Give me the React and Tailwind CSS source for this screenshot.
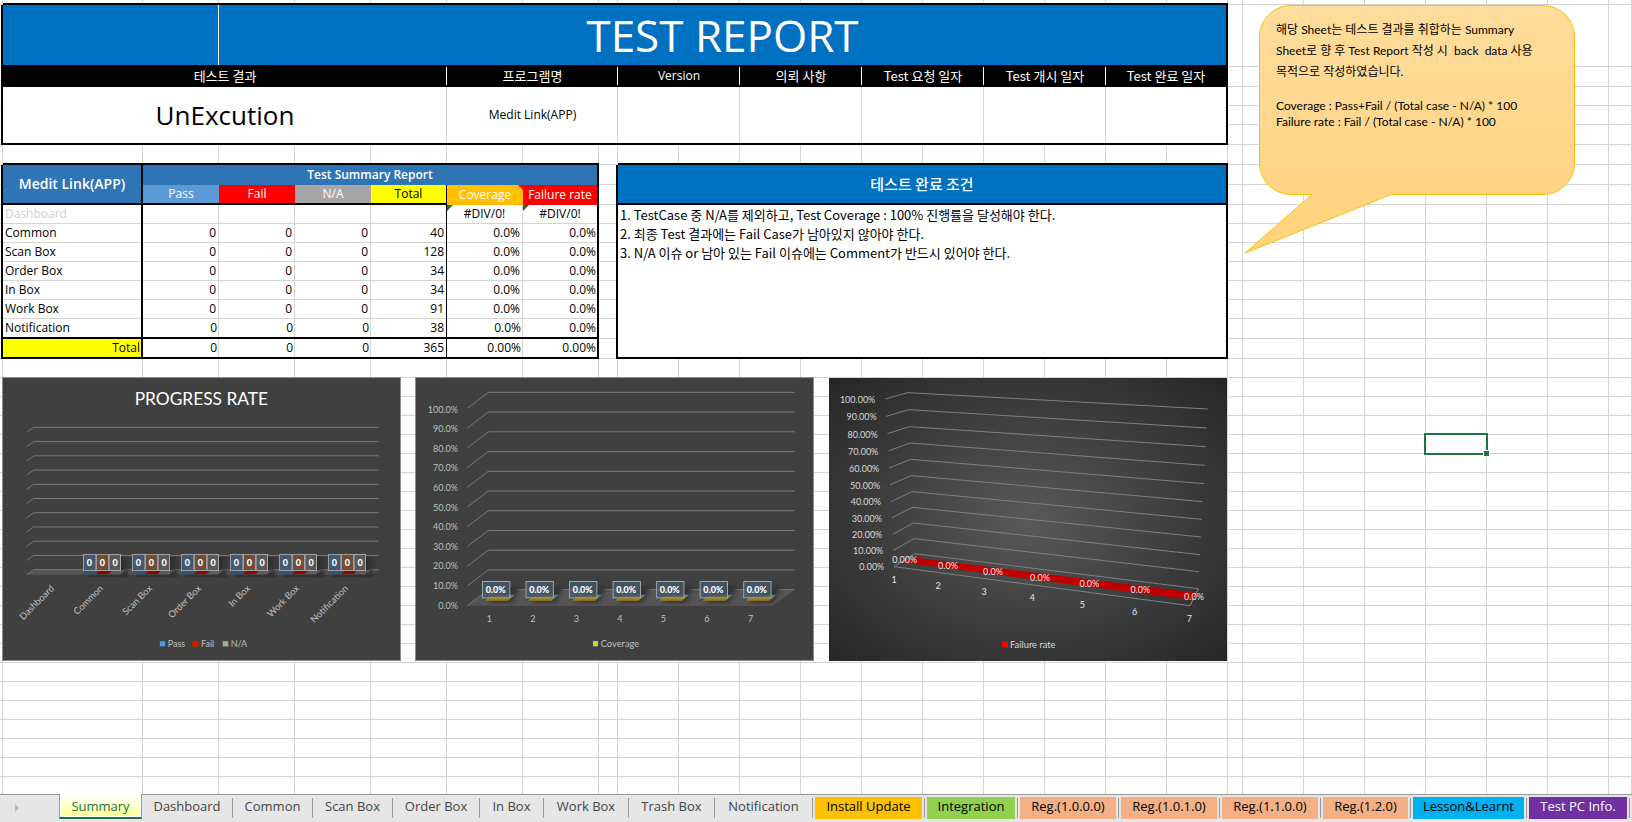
import { twMerge } from "tailwind-merge";

const LATIN = "font-['Open_Sans','Noto_Sans_CJK_KR',sans-serif]";
const HANGUL = "font-['Noto_Sans_CJK_KR',sans-serif] text-[13px]";

// Thick rules take the whole side of a cell; the thin grid line on the other
// side is an inset shadow, so that the two never meet in a mitred corner.
const BLACK_BOX = "border-r-2 border-b-2 border-r-black border-b-black shadow-none";
const EDGE = "border-r-2 border-b-0 border-r-black pb-px shadow-[inset_0_-1px_0_#d4d4d4]";
const THIN_EDGE = "border-b-0 border-r-black pb-px shadow-[inset_0_-1px_0_#d4d4d4]";
const FOOT = "border-r-0 border-b-2 border-b-black shadow-[inset_-1px_0_0_#d4d4d4]";

const COLUMNS = [
  "w-[3px]",
  "w-[140px]",
  ...Array(6).fill("w-[76px]"),
  "w-[19px]",
  ...Array(10).fill("w-[61px]"),
  "w-[15px]",
  ...Array(6).fill("w-[61px]"),
  "",
];

function Cell({ className, children, ...rest }) {
  return (
    <td
      className={twMerge("border-r border-b border-[#d4d4d4] bg-white p-0", className)}
      {...rest}
    >
      {children}
    </td>
  );
}

function Head({ className, children, ...rest }) {
  return (
    <th
      className={twMerge("border-r border-b border-[#d4d4d4] p-0 text-center font-normal", className)}
      {...rest}
    >
      {children}
    </th>
  );
}

function Blank({ count, className }) {
  return Array.from({ length: count }, (_, i) => <Cell key={i} className={className} />);
}

const INFO_HEADS = [
  { label: "테스트 결과", span: 5 },
  { label: "프로그램명", span: 3 },
  { label: "Version", span: 2, latin: true },
  { label: "의뢰 사항", span: 2 },
  { label: "Test 요청 일자", span: 2 },
  { label: "Test 개시 일자", span: 2 },
  { label: "Test 완료 일자", span: 2 },
];

const RESULTS = [
  ["Common", 40],
  ["Scan Box", 128],
  ["Order Box", 34],
  ["In Box", 34],
  ["Work Box", 91],
  ["Notification", 38],
];

function ReportHeader() {
  return (
    <>
      <tr className="h-[5px]">
        <Cell />
        <Blank count={18} className={FOOT} />
        <Blank count={8} />
      </tr>
      <tr className="h-[62px]">
        <Cell className={EDGE} />
        <Cell
          colSpan={2}
          className={twMerge(FOOT, "bg-[#0070c0] shadow-[inset_-1px_0_0_#ffffff]")}
        />
        <Head colSpan={16} className={`${BLACK_BOX} bg-[#0070c0] text-[44px] leading-[56px] text-white`}>
          TEST REPORT
        </Head>
        <Blank count={8} />
      </tr>
      <tr className="h-[20px]">
        <Cell className={EDGE} />
        {INFO_HEADS.map(({ label, span, latin }, i) => (
          <Head
            key={label}
            colSpan={span}
            className={twMerge(
              FOOT,
              "bg-black leading-[16px] text-white shadow-[inset_-1px_0_0_#ffffff]",
              latin ? "" : HANGUL,
              i === INFO_HEADS.length - 1 ? BLACK_BOX : "",
            )}
          >
            {label}
          </Head>
        ))}
        <Blank count={8} />
      </tr>
      <tr className="h-[19px]">
        <Cell className={EDGE} />
        <Cell rowSpan={3} colSpan={5} className={`${FOOT} text-center text-[26px] leading-[32px]`}>
          UnExcution
        </Cell>
        <Cell rowSpan={3} colSpan={3} className={`${FOOT} text-center`}>
          Medit Link(APP)
        </Cell>
        {[0, 1, 2, 3].map((i) => (
          <Cell key={i} rowSpan={3} colSpan={2} className={FOOT} />
        ))}
        <Cell rowSpan={3} colSpan={2} className={BLACK_BOX} />
        <Blank count={8} />
      </tr>
      <tr className="h-[19px]">
        <Cell className={EDGE} />
        <Blank count={8} />
      </tr>
      <tr className="h-[20px]">
        <Cell className={EDGE} />
        <Blank count={8} />
      </tr>
    </>
  );
}

function ErrorCell({ className }) {
  return (
    <Cell className={twMerge("relative text-center", className)}>
      <svg className="absolute top-0 left-0" width="6" height="6" viewBox="0 0 6 6" aria-hidden="true">
        <path d="M0 0H6L0 6Z" fill="#0a7d0a" />
      </svg>
      #DIV/0!
    </Cell>
  );
}

function SummaryRows() {
  return (
    <>
      <tr className="h-[20px]">
        <Cell />
        <Blank count={7} className={FOOT} />
        <Cell />
        <Blank count={10} className={FOOT} />
        <Blank count={8} />
      </tr>
      <tr className="h-[20px]">
        <Cell className={EDGE} />
        <Head rowSpan={2} className={`${BLACK_BOX} bg-[#2f75b5] text-[14px] font-semibold text-white`}>
          Medit Link(APP)
        </Head>
        <Head colSpan={6} className={twMerge(EDGE, "bg-[#2f75b5] font-semibold text-white shadow-none")}>
          Test Summary Report
        </Head>
        <Cell className={EDGE} />
        <Head
          rowSpan={2}
          colSpan={10}
          className={`${BLACK_BOX} bg-[#0070c0] font-['Noto_Sans_CJK_KR',sans-serif] text-[15px] font-medium text-white`}
        >
          테스트 완료 조건
        </Head>
        <Blank count={8} />
      </tr>
      <tr className="h-[20px]">
        <Cell className={EDGE} />
        <Head className={twMerge(FOOT, "bg-[#5b9bd5] text-white shadow-none")}>Pass</Head>
        <Head className={twMerge(FOOT, "bg-[#ff0000] text-white shadow-none")}>Fail</Head>
        <Head className={twMerge(FOOT, "bg-[#a6a6a6] text-white shadow-none")}>N/A</Head>
        <Head className={twMerge(BLACK_BOX, "border-r bg-[#ffff00]")}>Total</Head>
        <Head className="relative border-r-0 border-b-0 bg-[#ffc000] pb-px text-white">
          <svg className="absolute top-0 right-0" width="5" height="5" viewBox="0 0 5 5" aria-hidden="true">
            <path d="M0 0H5V5Z" fill="#ff0000" />
          </svg>
          Coverage
        </Head>
        <Head className={twMerge(EDGE, "bg-[#ff0000] text-white shadow-none")}>Failure rate</Head>
        <Cell className={EDGE} />
        <Blank count={8} />
      </tr>
      <tr className="h-[19px]">
        <Cell className={EDGE} />
        <Cell className={`${EDGE} pl-[2px] text-[#d0cece]`}>Dashboard</Cell>
        <Blank count={3} />
        <Cell className={THIN_EDGE} />
        <ErrorCell />
        <ErrorCell className={EDGE} />
        <Cell className={EDGE} />
        <Cell rowSpan={8} colSpan={10} className={`${BLACK_BOX} ${HANGUL} pl-[2px] align-top leading-[19px]`}>
          <ol>
            <li>1. TestCase 중 N/A를 제외하고, Test Coverage : 100% 진행률을 달성해야 한다.</li>
            <li>2. 최종 Test 결과에는 Fail Case가 남아있지 않아야 한다.</li>
            <li>3. N/A 이슈 or 남아 있는 Fail 이슈에는 Comment가 반드시 있어야 한다.</li>
          </ol>
        </Cell>
        <Blank count={8} />
      </tr>
      {RESULTS.map(([name, total], i) => {
        const last = i === RESULTS.length - 1;
        const foot = last ? FOOT : "";
        const edge = last ? BLACK_BOX : EDGE;
        return (
          <tr key={name} className={last ? "h-[20px]" : "h-[19px]"}>
            <Cell className={EDGE} />
            <Cell className={`${edge} pl-[2px]`}>{name}</Cell>
            {[0, 1, 2].map((c) => (
              <Cell key={c} className={`${foot} pr-[2px] text-right`}>0</Cell>
            ))}
            <Cell className={twMerge(last ? BLACK_BOX : THIN_EDGE, "border-r pr-[2px] text-right")}>{total}</Cell>
            <Cell className={`${foot} pr-[2px] text-right`}>0.0%</Cell>
            <Cell className={`${edge} pr-px text-right`}>0.0%</Cell>
            <Cell className={EDGE} />
            <Blank count={8} />
          </tr>
        );
      })}
      <tr className="h-[20px]">
        <Cell className={EDGE} />
        <Cell className={`${BLACK_BOX} bg-[#ffff00] pr-px text-right`}>Total</Cell>
        {[0, 1, 2].map((c) => (
          <Cell key={c} className={`${FOOT} pr-[2px] text-right`}>0</Cell>
        ))}
        <Cell className={twMerge(BLACK_BOX, "border-r pr-[2px] text-right")}>365</Cell>
        <Cell className={`${FOOT} pr-[2px] text-right`}>0.00%</Cell>
        <Cell className={`${BLACK_BOX} pr-px text-right`}>0.00%</Cell>
        <Cell className={EDGE} />
        <Blank count={8} />
      </tr>
    </>
  );
}

function EmptyRows() {
  return Array.from({ length: 60 }, (_, r) => (
    <tr key={r} className="h-[19px]">
      {r === 4 ? (
        <>
          <Blank count={23} />
          <Cell className="relative">
            <div className="absolute -inset-[2px] border-2 border-[#217346]">
              <div className="absolute -right-[4px] -bottom-[4px] size-[7px] border border-white bg-[#217346]" />
            </div>
          </Cell>
          <Blank count={3} />
        </>
      ) : (
        <Blank count={27} />
      )}
    </tr>
  ));
}

const CHART_FONT = "font-['Lato',sans-serif] text-[27px]";

function ProgressChart() {
  const names = ["Dashboard", "Common", "Scan Box", "Order Box", "In Box", "Work Box", "Notification"];
  return (
    <svg width="399" height="284" viewBox="6 21 1197 852" role="img" aria-label="Progress rate" className={CHART_FONT}>
      <defs>
        <linearGradient id="shade" x1="0" x2="1">
          <stop offset="0" stopColor="#2c2c2c" />
          <stop offset="1" stopColor="#2c2c2c" stopOpacity="0" />
        </linearGradient>
      </defs>
      <rect x="7.5" y="22.5" width="1194" height="849" fill="#404040" stroke="#8c8c8c" strokeWidth="3" />
      <text x="604" y="104" textAnchor="middle" fill="#fff" className="text-[52px]">PROGRESS RATE</text>
      <path d="M80 614L102 599H1136L1114 614Z" fill="#555" />
      {Array.from({ length: 11 }, (_, i) => 172 + i * 42.7).map((y) => (
        <path key={y} d={`M80 ${y + 15}L101 ${y}H1136`} fill="none" stroke="#7a7a7a" strokeWidth="3" />
      ))}
      {names.map((name, i) => (
        <text
          key={name}
          transform={`translate(${164 + i * 147} 657) rotate(-45)`}
          textAnchor="end"
          fill="#bfbfbf"
          className="text-[28px]"
        >
          {name}
        </text>
      ))}
      {[0, 1, 2, 3, 4, 5].map((i) => (
        <g key={i} transform={`translate(${i * 147} 0)`}>
          <rect x="362" y="560" width="34" height="62" fill="url(#shade)" />
          <path d="M262 614H366L382 604V622H262Z" fill="#333" />
          <path d="M247 612L260 600H300L288 612Z" fill="#27557f" />
          <path d="M288 612L301 600H340L326 612Z" fill="#9c0000" />
          <path d="M327 612L340 600H376L362 612Z" fill="#5c5c5c" />
          <rect x="250.500" y="553.5" width="37" height="48" fill="#44596d" stroke="#9a9fa5" strokeWidth="3" />
          <rect x="289.500" y="553.5" width="36" height="48" fill="#704d38" stroke="#a59a94" strokeWidth="3" />
          <rect x="327.500" y="553.5" width="34" height="48" fill="#595959" stroke="#a6a6a6" strokeWidth="3" />
          {[268, 307, 345].map((x) => (
            <text key={x} x={x} y="588" textAnchor="middle" fill="#fff" className="font-black">0</text>
          ))}
        </g>
      ))}
      <g fill="#bfbfbf">
        <rect x="479" y="813" width="17" height="17" fill="#5b9bd5" stroke="#1f4e79" strokeWidth="2" />
        <text x="503" y="831">Pass</text>
        <rect x="578" y="813" width="17" height="17" fill="#ff0000" stroke="#843c0c" strokeWidth="2" />
        <text x="603" y="831">Fail</text>
        <rect x="668" y="813" width="17" height="17" fill="#a5a5a5" stroke="#606060" strokeWidth="2" />
        <text x="692" y="831">N/A</text>
      </g>
    </svg>
  );
}

function CoverageChart() {
  const ticks = Array.from({ length: 11 }, (_, i) => i);
  return (
    <svg width="399" height="284" viewBox="30 21 1197 852" role="img" aria-label="Coverage" className={CHART_FONT}>
      <defs>
        <filter id="soft"><feGaussianBlur stdDeviation="6" /></filter>
      </defs>
      <rect x="31.500" y="22.5" width="1194" height="849" fill="#404040" stroke="#8c8c8c" strokeWidth="3" />
      <path d="M186 707L250 659H1169L1104 707Z" fill="#575455" />
      {ticks.map((i) => {
        const y = 67 + i * 59.2;
        return <path key={i} d={`M187 ${y + 48}L250 ${y}H1169`} fill="none" stroke="#7a7a7a" strokeWidth="3" />;
      })}
      <g fill="#bfbfbf" textAnchor="end">
        {ticks.map((i) => (
          <text key={i} x="159" y={128 + i * 58.8}>{`${100 - i * 10}.0%`}</text>
        ))}
      </g>
      {[1, 2, 3, 4, 5, 6, 7].map((n, i) => (
        <g key={n} transform={`translate(${i * 130.6} 0)`} textAnchor="middle">
          <path d="M246 698L322 698L344 648H310Z" fill="#303030" filter="url(#soft)" />
          <path d="M230 693L257 673H335L311 693Z" fill="#294f72" />
          <path d="M237 692L261 675H329L308 692Z" fill="#a07900" />
          <rect x="232.500" y="634.500" width="82" height="49" fill="#44596d" fillOpacity=".75" stroke="#a0a5aa" strokeWidth="3" />
          <text x="272" y="669" fill="#fff" className="font-black">0.0%</text>
          <text x="253" y="756" fill="#bfbfbf">{n}</text>
        </g>
      ))}
      <rect x="562" y="811" width="19" height="20" fill="#1f4e79" />
      <rect x="564" y="813" width="15" height="16" fill="#ffc000" />
      <text x="587" y="831" fill="#bfbfbf" className="text-[28px]">Coverage</text>
    </svg>
  );
}

// Front, back-left and back-right corner of every grid line.
const WALL = [
  [196, 87, 263, 68, 1163, 117],
  [199, 139, 266, 119, 1160, 174],
  [202, 191, 268, 170, 1157, 230],
  [205, 243, 270, 219, 1154, 286],
  [207, 294, 272, 268, 1151, 341],
  [210, 344, 274, 317, 1148, 395],
  [213, 395, 276, 365, 1146, 448],
  [216, 443, 278, 412, 1143, 501],
  [218, 493, 280, 459, 1140, 554],
  [220, 541, 282, 506, 1137, 605],
  [222, 590, 284, 551, 1135, 656],
];
const RATE_TICKS = [
  [166, 90], [170, 141], [173, 194], [175, 246], [178, 297], [181, 348],
  [183, 396], [186, 447], [187, 495], [190, 542], [193, 591],
];
const RATE_POINTS = [
  [254, 570], [384, 588], [519, 606], [660, 624], [808, 642], [961, 660], [1122, 681],
];
const RATE_CATEGORIES = [
  [222, 629], [354, 648], [492, 666], [637, 684], [787, 705], [944, 726], [1108, 747],
];

function FailureChart() {
  return (
    <svg width="398" height="283" viewBox="27 24 1194 849" role="img" aria-label="Failure rate" className={`${CHART_FONT} mt-px ml-px`}>
      <defs>
        <radialGradient id="spot" cx=".5" cy=".5" r=".7">
          <stop offset="0" stopColor="#595959" />
          <stop offset="1" stopColor="#262626" />
        </radialGradient>
      </defs>
      <rect x="27" y="24" width="1194" height="849" fill="url(#spot)" />
      <g fill="none" stroke="#808080" strokeWidth="3">
        {WALL.map(([fx, fy, bx, by, rx, ry]) => (
          <path key={fy} d={`M${fx} ${fy}L${bx} ${by}L${rx} ${ry}`} />
        ))}
        <path d="M222 590L1110 707L1135 656" />
      </g>
      <path d="M290 563L1140 670L1115 690L246 577Z" fill="#c00000" />
      <path d="M1110 707L1135 656" stroke="#808080" strokeWidth="3" />
      <g fill="#d9d9d9" textAnchor="end">
        {RATE_TICKS.map(([x, y], i) => (
          <text key={y} x={x} y={y + 9}>{`${100 - i * 10}.00%`}</text>
        ))}
      </g>
      <g fill="#e6e6e6" textAnchor="middle">
        {RATE_POINTS.map(([x, y], i) => (
          <text key={x} x={x} y={y + 9}>{i === 0 ? "0.00%" : "0.0%"}</text>
        ))}
        {RATE_CATEGORIES.map(([x, y], i) => (
          <text key={x} x={x} y={y + 9}>{i + 1}</text>
        ))}
      </g>
      <rect x="546" y="814" width="18" height="18" fill="#ff0000" />
      <text x="570" y="834" fill="#d9d9d9" className="text-[28px]">Failure rate</text>
    </svg>
  );
}

function Callout() {
  return (
    <aside className="absolute top-[4px] left-[1244px] w-[332px] font-['Lato','Noto_Sans_CJK_KR',sans-serif] text-[12px]">
      <svg className="absolute top-0 left-0" width="332" height="252" viewBox="0 0 332 252" aria-hidden="true">
        <defs>
          <linearGradient id="amber" x1="0" x2="0" y1="0" y2="1">
            <stop offset="0" stopColor="#ffdd9c" />
            <stop offset="0.5" stopColor="#ffd78e" />
            <stop offset="1" stopColor="#ffd479" />
          </linearGradient>
        </defs>
        <path
          d="M47 1.500H299A31.500 31.500 0 0 1 330.500 33V159A31.500 31.500 0 0 1 299 190.500H147L1 249L68 190.500H47A31.500 31.500 0 0 1 15.500 159V33A31.500 31.500 0 0 1 47 1.500Z"
          fill="url(#amber)"
          stroke="#fbbd08"
        />
      </svg>
      <div className="relative pt-[15px] pl-[32px]">
        <p className="leading-[21px] whitespace-pre">
          {"해당 Sheet는 테스트 결과를 취합하는 Summary\nSheet로 향 후 Test Report 작성 시  back  data 사용\n목적으로 작성하였습니다."}
        </p>
        <p className="mt-[16px] leading-[16px]">
          Coverage : Pass+Fail / (Total case - N/A) * 100
          <br />
          Failure rate : Fail / (Total case - N/A) * 100
        </p>
      </div>
    </aside>
  );
}

const TABS = [
  ["Dashboard", "w-[91px]"],
  ["Common", "w-[80px]"],
  ["Scan Box", "w-[80px]"],
  ["Order Box", "w-[87px]"],
  ["In Box", "w-[64px]"],
  ["Work Box", "w-[85px]"],
  ["Trash Box", "w-[86px]"],
  ["Notification", "w-[98px]"],
  ["Install Update", "w-[112px]", "bg-[#ffc000] text-black"],
  ["Integration", "w-[93px]", "bg-[#92d050] text-black"],
  ["Reg.(1.0.0.0)", "w-[101px]", "bg-[#f4b084] text-black"],
  ["Reg.(1.0.1.0)", "w-[101px]", "bg-[#f4b084] text-black"],
  ["Reg.(1.1.0.0)", "w-[101px]", "bg-[#f4b084] text-black"],
  ["Reg.(1.2.0)", "w-[90px]", "bg-[#f4b084] text-black"],
  ["Lesson&Learnt", "w-[116px]", "bg-[#00b0f0] text-black"],
  ["Test PC Info.", "w-[103px]", "bg-[#7030a0] text-white"],
];

function SheetTabs() {
  return (
    <nav aria-label="Sheets" className="flex h-[28px] shrink-0 overflow-hidden bg-[#e6e6e6] text-[13px] leading-[18px] text-[#444]">
      <div className="flex w-[59px] shrink-0 border-t border-[#999] pt-[9px] pl-[15px]">
        <svg width="4" height="8" viewBox="0 0 4 8" aria-hidden="true">
          <path d="M0 0L4 4L0 8Z" fill="#b8b8b8" />
        </svg>
      </div>
      <button
        type="button"
        aria-current="page"
        className="h-[25px] w-[83px] shrink-0 border-x border-b-2 border-x-[#999] border-b-[#217346] bg-white px-[2px] pb-px"
      >
        <span className="block h-[22px] bg-linear-to-b from-white to-[#ffff8f] pt-[3px] text-[#217346]">Summary</span>
      </button>
      <div className="flex grow border-t border-[#999] pt-[2px]">
        {TABS.map(([label, width, tint]) => (
          <button
            key={label}
            type="button"
            className={twMerge("flex h-[22px] shrink-0 whitespace-nowrap", width)}
          >
            <span className={twMerge("mx-[2px] h-[22px] grow", tint)}>{label}</span>
            <span className="mt-px h-[20px] w-px bg-[#999]" />
          </button>
        ))}
      </div>
    </nav>
  );
}

export default function App() {
  return (
    <div className={`flex h-screen flex-col overflow-hidden bg-white text-black ${LATIN}`}>
      <main className="relative min-h-0 grow overflow-hidden">
        <table className="w-full table-fixed border-separate border-spacing-0 text-[12px] leading-[16px]">
          <colgroup>
            {COLUMNS.map((width, i) => (
              <col key={i} className={width} />
            ))}
          </colgroup>
          <tbody>
            <ReportHeader />
            <SummaryRows />
            <EmptyRows />
          </tbody>
        </table>
        <div className="absolute top-[377px] left-[2px] flex items-start gap-[14px]">
          <ProgressChart />
          <CoverageChart />
          <FailureChart />
        </div>
        <Callout />
      </main>
      <SheetTabs />
    </div>
  );
}
